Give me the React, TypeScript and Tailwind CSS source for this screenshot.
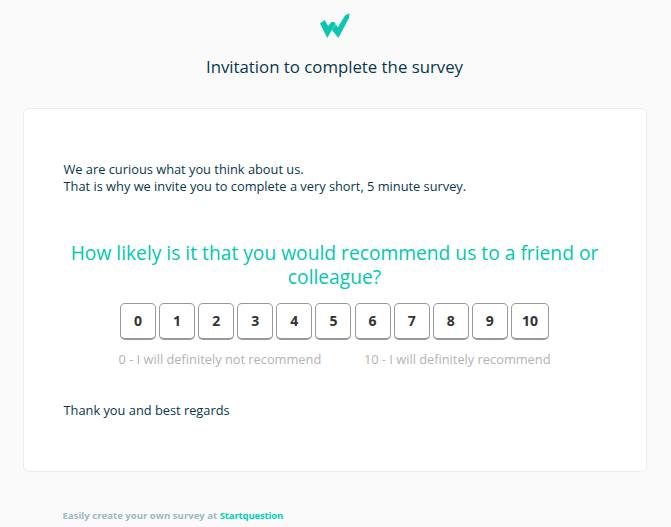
const scores = [0, 1, 2, 3, 4, 5, 6, 7, 8, 9, 10];

const Logo = () => (
  <svg className="block h-[26px] w-[30px]" viewBox="0 0 30 26" fill="#08c7ae">
    <path d="M0 10.4 4.6 7 8.2 13 11.4 9 14.2 9 15.6 11 11.6 17.2 7.3 25z" />
    <path d="M11.9 16.8 15.9 11.2 17.9 14.3 25 2.6 29.5.2 29 5 18.3 25z" />
  </svg>
);

const ScoreScale = () => (
  <div className="ml-[96px] mt-[14px] flex gap-[3.1px]">
    {scores.map((score) => (
      <button
        key={score}
        className={`h-[37px] shrink-0 rounded-[5px] border border-b-2 border-[#999] bg-white pb-px text-[14px] font-bold text-[#333] ${
          score === 10 ? "w-[38px]" : "w-[36px]"
        }`}
      >
        {score}
      </button>
    ))}
  </div>
);

const App = () => {
  return (
    <div className="h-[527px] overflow-hidden bg-[#fafafa] font-['Open_Sans',sans-serif] text-[#06384d]">
      <header className="flex flex-col items-center pt-[13px] pr-[2px]">
        <Logo />
        <h1 className="mt-[16px] text-[16.8px] leading-[24px]">Invitation to complete the survey</h1>
      </header>

      <main className="ml-[23px] mt-[29px] h-[364px] w-[624px] rounded-[6px] border border-[#ededed] bg-white pt-[52px]">
        <p className="ml-[39.5px] text-[12.82px] leading-[17px]">
          We are curious what you think about us.
          <br />
          That is why we invite you to complete a very short, 5 minute survey.
        </p>

        <h2 className="mt-[46px] pr-[1px] text-center text-[19.23px] leading-[24px] text-[#00c9ae]">
          How likely is it that you would recommend us to a friend or colleague?
        </h2>

        <ScoreScale />

        <div className="ml-[94.5px] mt-[9px] flex w-[432px] justify-between text-[12.82px] leading-[20px] text-[#b3b3b3]">
          <span>0 - I will definitely not recommend</span>
          <span>10 - I will definitely recommend</span>
        </div>

        <p className="ml-[39.5px] mt-[33px] text-[12.82px] leading-[17px]">Thank you and best regards</p>
      </main>

      <footer className="ml-[62.5px] mt-[36px] text-[9.6px] font-bold leading-[16px] text-[#9bb8c5]">
        Easily create your own survey at <a className="tracking-[-0.2px] text-[#00d0b5]">Startquestion</a>
      </footer>
    </div>
  );
};

export default App;
